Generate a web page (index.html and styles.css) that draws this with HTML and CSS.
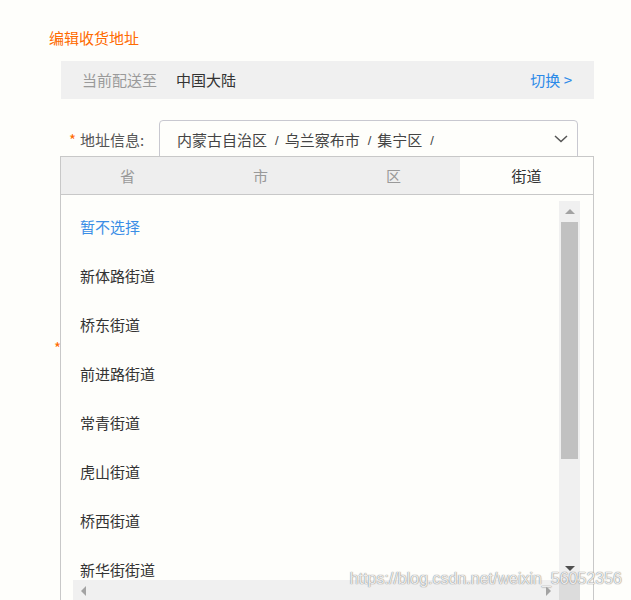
FILE: index.html
```html
<!DOCTYPE html>
<html lang="zh-CN">
<head>
<meta charset="utf-8">
<title>编辑收货地址</title>
<link rel="stylesheet" href="styles.css">
</head>
<body>
<div class="page">
  <h1 class="title">编辑收货地址</h1>
  <div class="ship-bar">
    <span class="ship-label">当前配送至</span>
    <span class="ship-value">中国大陆</span>
    <a class="ship-switch">切换 &gt;</a>
  </div>
  <div class="form-row">
    <div class="label-col"><span class="star">*</span><span class="label">地址信息:</span></div>
    <div class="select">
      <span>内蒙古自治区</span><span class="sep">/</span><span>乌兰察布市</span><span class="sep">/</span><span>集宁区</span><span class="sep">/</span>
      <svg class="chevron" width="14" height="8" viewBox="0 0 14 8"><path d="M1 1 L7 6.5 L13 1" fill="none" stroke="#555" stroke-width="1.5"/></svg>
      <div class="panel">
        <div class="tabs">
          <div class="tab">省</div>
          <div class="tab">市</div>
          <div class="tab">区</div>
          <div class="tab active">街道</div>
        </div>
        <div class="scroll">
          <ul class="list">
            <li class="item none">暂不选择</li>
            <li class="item">新体路街道</li>
            <li class="item">桥东街道</li>
            <li class="item">前进路街道</li>
            <li class="item">常青街道</li>
            <li class="item">虎山街道</li>
            <li class="item">桥西街道</li>
            <li class="item">新华街街道</li>
          </ul>
          <div class="vbar">
            <div class="arrow-box"><span class="tri up"></span></div>
            <div class="thumb"></div>
            <div class="vbar-fill"></div>
            <div class="arrow-box"><span class="tri down"></span></div>
          </div>
          <div class="hbar">
            <span class="tri left"></span>
            <span class="tri right"></span>
          </div>
          <div class="corner"></div>
        </div>
      </div>
    </div>
  </div>
  <div class="form-row second">
    <div class="label-col"><span class="star">*</span><span class="label">详细地址:</span></div>
  </div>
</div>
<div class="watermark">https://blog.csdn.net/weixin_56052356</div>
</body>
</html>
```

FILE: styles.css
```css
html, body {
  margin: 0;
  padding: 0;
  background: #fefefb;
  font-family: "Noto Sans CJK SC", "Noto Sans", sans-serif;
  font-size: 15px;
  color: #333;
  height: 600px;
  overflow: hidden;
}

.page {
  padding: 28px 0 0 49px;
  position: relative;
}

.title {
  margin: 0;
  font-size: 15px;
  font-weight: normal;
  line-height: 20px;
  color: #ff6a00;
}

.ship-bar {
  margin: 13px 0 0 12px;
  width: 533px;
  height: 38px;
  background: #f0f0f0;
  display: flex;
  align-items: center;
  padding: 0 22px 1px 21px;
  box-sizing: border-box;
}

.ship-label {
  color: #9a9a9a;
  width: 94px;
}

.ship-value {
  color: #333;
  flex: 1;
}

.ship-switch {
  color: #2c8ae8;
}

.form-row {
  display: flex;
  align-items: center;
  margin: 21px 0 0 20px;
}

.label-col {
  width: 90px;
  display: flex;
  align-items: center;
}

.star {
  color: #ff6a00;
  width: 11px;
}

.label {
  color: #555;
}

.select {
  position: relative;
  width: 419px;
  height: 38px;
  box-sizing: border-box;
  border: 1px solid #c8c8d0;
  border-radius: 4px 4px 0 0;
  padding: 0 0 0 17px;
  display: flex;
  align-items: center;
  color: #444;
}

.sep {
  margin: 3px 6px 0 8px;
  font-family: "Liberation Sans", sans-serif;
  font-size: 13px;
  display: inline-block;
}

.chevron {
  position: absolute;
  right: 9px;
  top: 14px;
}

.panel {
  position: absolute;
  z-index: 5;
  left: -100px;
  top: calc(100% - 1px);
  width: 534px;
  height: 470px;
  box-sizing: border-box;
  border: 1px solid #c8c8c8;
  background: #fefefb;
}

.tabs {
  display: grid;
  grid-template-columns: repeat(4, 1fr);
  height: 37px;
  border-bottom: 1px solid #c8c8c8;
  background: #eeeeee;
}

.tab {
  display: flex;
  align-items: center;
  justify-content: center;
  color: #999;
}

.tab.active {
  background: #fefefb;
  color: #333;
}

.scroll {
  margin: 6px 13px 0 12px;
  display: grid;
  grid-template-columns: 486px 21px;
  grid-template-rows: 379px 21px;
}

.list {
  margin: 0;
  padding: 1px 0 0 7px;
  list-style: none;
  overflow: hidden;
}

.item {
  height: 49px;
  line-height: 49px;
  color: #333;
}

.item.none {
  color: #3a8ee6;
}

.vbar {
  background: #f0f0f0;
  display: flex;
  flex-direction: column;
}

.arrow-box {
  height: 21px;
  display: flex;
  align-items: center;
  justify-content: center;
}

.thumb {
  margin: 0 2px;
  height: 237px;
  background: #c1c1c1;
}

.vbar-fill {
  flex: 1;
}

.hbar {
  background: #f0f0f0;
  display: flex;
  align-items: center;
  justify-content: space-between;
  padding: 0 8px;
}

.corner {
  background: #dcdcdc;
}

.tri {
  width: 0;
  height: 0;
  display: block;
}

.tri.up {
  border-left: 5px solid transparent;
  border-right: 5px solid transparent;
  border-bottom: 5px solid #a3a3a3;
}

.tri.down {
  border-left: 5px solid transparent;
  border-right: 5px solid transparent;
  border-top: 5px solid #505050;
  margin-bottom: 2px;
}

.tri.left {
  border-top: 5px solid transparent;
  border-bottom: 5px solid transparent;
  border-right: 5px solid #a3a3a3;
}

.tri.right {
  border-top: 5px solid transparent;
  border-bottom: 5px solid transparent;
  border-left: 5px solid #a3a3a3;
}

.form-row.second {
  margin: 179px 0 0 5px;
}

.watermark {
  position: absolute;
  right: 9px;
  top: 570px;
  z-index: 10;
  font-family: "Liberation Sans", Arial, sans-serif;
  font-size: 16px;
  color: rgba(255, 255, 255, 0.85);
  text-shadow: 0 0 1px rgba(120, 120, 120, 0.8), 0 0 1px rgba(120, 120, 120, 0.8);
}
```
